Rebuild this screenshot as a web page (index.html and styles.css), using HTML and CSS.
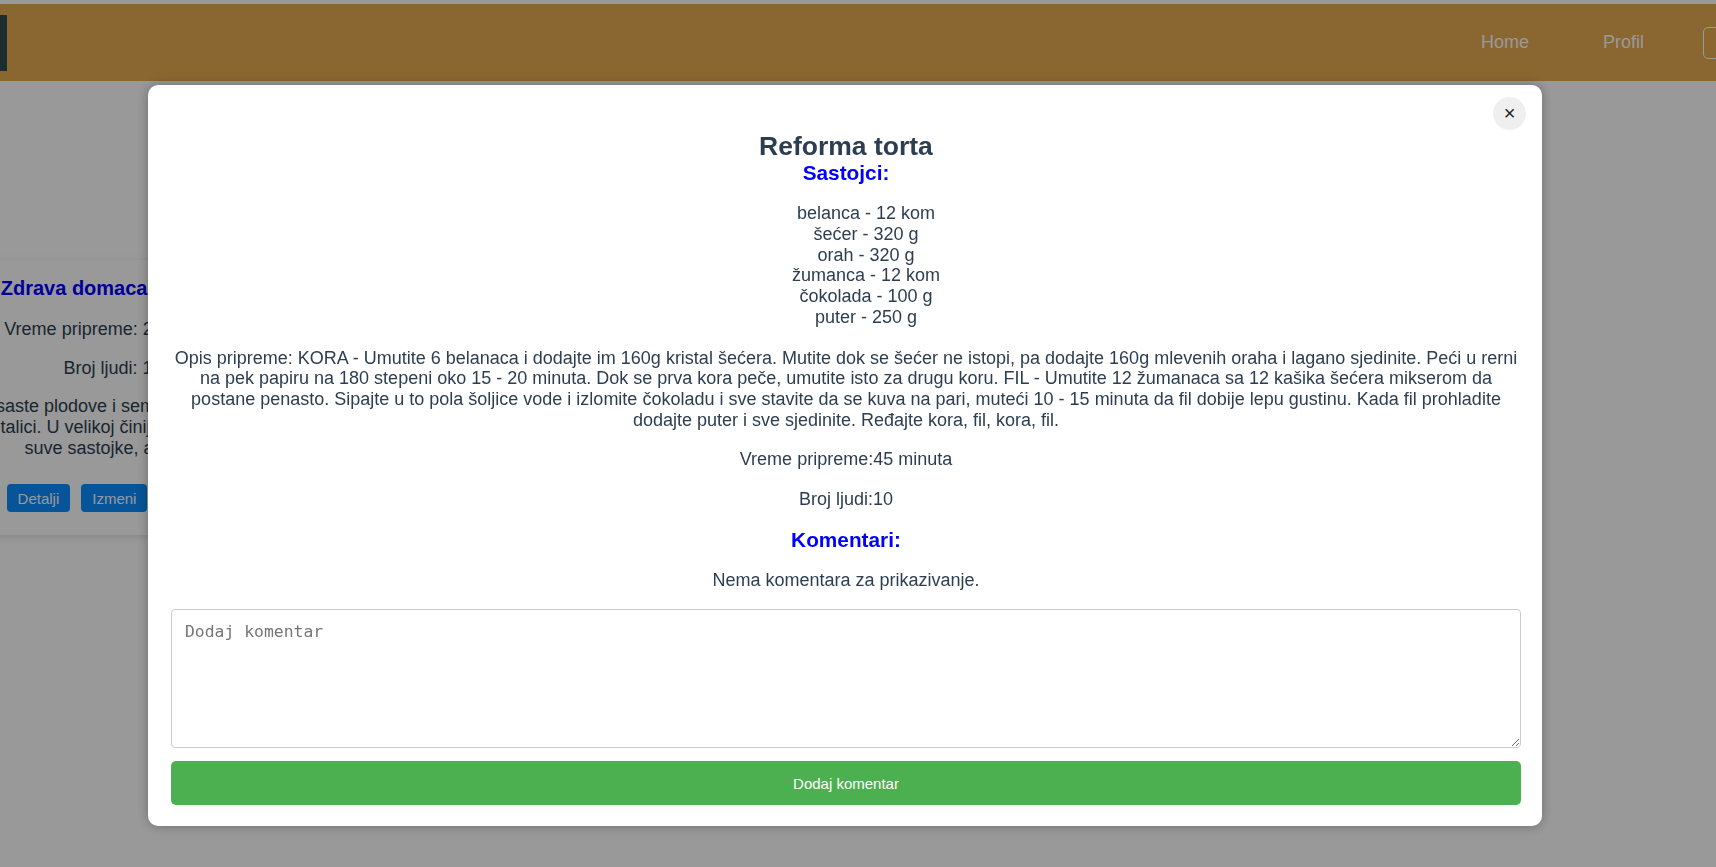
FILE: index.html
```html
<!DOCTYPE html>
<html lang="sr">
<head>
<meta charset="utf-8">
<title>Recepti</title>
<link rel="stylesheet" href="styles.css">
</head>
<body>
  <header class="topbar">
    <div class="logo"></div>
    <nav class="nav">
      <a class="nav-link" href="#">Home</a>
      <a class="nav-link" href="#">Profil</a>
      <button class="nav-btn">Odjava</button>
    </nav>
  </header>

  <main class="page">
    <section class="cards">
      <article class="card">
        <h3 class="card-title">Zdrava domaca granola</h3>
        <p class="card-line">Vreme pripreme: 20 minuta</p>
        <p class="card-line">Broj ljudi: 10</p>
        <p class="card-text">Orasaste plodove i semenke ispecite<br>na metalici. U velikoj činiji pomešajte sve<br>suve sastojke, a zatim</p>
        <div class="card-actions">
          <button class="btn-blue">Detalji</button>
          <button class="btn-blue">Izmeni</button>
        </div>
      </article>
    </section>
  </main>

  <div class="overlay">
    <div class="modal">
      <button class="close-btn" aria-label="Zatvori">×</button>
      <h2 class="recipe-title">Reforma torta</h2>
      <h3 class="section-title">Sastojci:</h3>
      <ul class="ingredients">
        <li>belanca - 12 kom</li>
        <li>šećer - 320 g</li>
        <li>orah - 320 g</li>
        <li>žumanca - 12 kom</li>
        <li>čokolada - 100 g</li>
        <li>puter - 250 g</li>
      </ul>
      <p class="desc">Opis pripreme: KORA - Umutite 6 belanaca i dodajte im 160g kristal šećera. Mutite dok se šećer ne istopi, pa dodajte 160g mlevenih oraha i lagano sjedinite. Peći u rerni na pek papiru na 180 stepeni oko 15 - 20 minuta. Dok se prva kora peče, umutite isto za drugu koru. FIL - Umutite 12 žumanaca sa 12 kašika šećera mikserom da postane penasto. Sipajte u to pola šoljice vode i izlomite čokoladu i sve stavite da se kuva na pari, muteći 10 - 15 minuta da fil dobije lepu gustinu. Kada fil prohladite dodajte puter i sve sjedinite. Ređajte kora, fil, kora, fil.</p>
      <p class="meta">Vreme pripreme:45 minuta</p>
      <p class="meta meta-tight">Broj ljudi:10</p>
      <h3 class="section-title comments-title">Komentari:</h3>
      <p class="empty">Nema komentara za prikazivanje.</p>
      <textarea class="comment-input" placeholder="Dodaj komentar"></textarea>
      <button class="submit-btn">Dodaj komentar</button>
    </div>
  </div>
</body>
</html>
```

FILE: styles.css
```css
* { box-sizing: border-box; }

html, body {
  margin: 0;
  padding: 0;
  overflow: hidden;
}

body {
  background: #ffffff;
  padding-top: 4px;
  font-family: "Liberation Sans", Arial, sans-serif;
  color: #2c3e50;
  text-align: center;
  width: 1716px;
  height: 867px;
}

.topbar {
  height: 77px;
  background: #e6aa52;
  display: flex;
  align-items: center;
  overflow: hidden;
}

.logo {
  width: 60px;
  height: 56px;
  margin-left: -53px;
  background: linear-gradient(90deg, #3b5a60, #2f4a50);
}

.nav {
  margin-left: auto;
  margin-right: -77px;
  display: flex;
  align-items: center;
}

.nav-link {
  color: #ffffff;
  text-decoration: none;
  font-size: 18px;
  margin-right: 74px;
}

.nav-link + .nav-link {
  margin-right: 59px;
}

.nav-btn {
  width: 90px;
  height: 32px;
  background: transparent;
  border: 1px solid #ffffff;
  border-radius: 5px;
  color: #ffffff;
  font-family: "Liberation Sans", Arial, sans-serif;
  font-size: 16px;
}

.page {
  padding-top: 179px;
}

.cards {
  display: flex;
}

.card {
  width: 380px;
  height: 275px;
  margin-left: -77px;
  padding: 17px 16px 0;
  background: #ffffff;
  box-shadow: 0 2px 8px rgba(0, 0, 0, 0.12);
}

.card-title {
  margin: 0;
  font-size: 20px;
  font-weight: bold;
  color: #0000ff;
  white-space: nowrap;
}

.card-line {
  margin: 19px 0 0;
  font-size: 18px;
  line-height: 1.15;
}

.card-line + .card-line {
  margin-top: 18px;
}

.card-text {
  margin: 18px 0 0;
  font-size: 18px;
  line-height: 1.15;
  white-space: nowrap;
}

.card-actions {
  margin-top: 26px;
  display: flex;
  justify-content: center;
  gap: 11px;
  padding-right: 72px;
}

.btn-blue {
  height: 28px;
  padding: 0 11px;
  background: #0b8cff;
  color: #ffffff;
  border: none;
  border-radius: 4px;
  font-family: "Liberation Sans", Arial, sans-serif;
  font-size: 15px;
}

.overlay {
  position: fixed;
  inset: 0;
  background: rgba(0, 0, 0, 0.4);
  display: flex;
  align-items: flex-start;
  padding: 85px 0 0 148px;
}

.modal {
  position: relative;
  width: 1394px;
  height: 741px;
  background: #ffffff;
  border-radius: 10px;
  padding: 46px 21px 21px 23px;
  box-shadow: 0 0 12px rgba(0, 0, 0, 0.3);
  display: flex;
  flex-direction: column;
}

.close-btn {
  position: absolute;
  top: 12px;
  right: 16px;
  width: 33px;
  height: 33px;
  border-radius: 50%;
  border: none;
  background: #efefef;
  color: #222;
  font-family: "Liberation Sans", Arial, sans-serif;
  font-size: 20px;
  line-height: 33px;
  padding: 0;
}

.recipe-title {
  margin: 0;
  font-size: 26.5px;
  font-weight: bold;
  color: #2c3e50;
  line-height: 1.15;
}

.section-title {
  margin: 0;
  font-size: 20.8px;
  font-weight: bold;
  color: #0000ff;
  line-height: 1.15;
}

.ingredients {
  list-style: none;
  margin: 18px 0 0;
  padding: 0 0 0 40px;
  font-size: 18px;
  line-height: 1.15;
}

.desc {
  margin: 20px 0 0;
  font-size: 18px;
  line-height: 1.15;
}

.meta {
  margin: 19px 0 0;
  font-size: 18px;
  line-height: 1.15;
}

.comments-title {
  margin-top: 18px;
}

.empty {
  margin: 18px 0 0;
  font-size: 18px;
  line-height: 1.15;
}

.comment-input {
  margin-top: 19px;
  width: 100%;
  height: 140px;
  border: 1px solid #cccccc;
  border-radius: 4px;
  padding: 12px 13px;
  font-family: "DejaVu Sans Mono", monospace;
  font-size: 16.4px;
  color: #333;
  resize: vertical;
}

.comment-input::placeholder {
  color: #767676;
}

.submit-btn {
  margin-top: 13px;
  width: 100%;
  height: 44px;
  background: #4caf50;
  color: #ffffff;
  border: none;
  border-radius: 5px;
  font-family: "Liberation Sans", Arial, sans-serif;
  font-size: 15px;
}
```
